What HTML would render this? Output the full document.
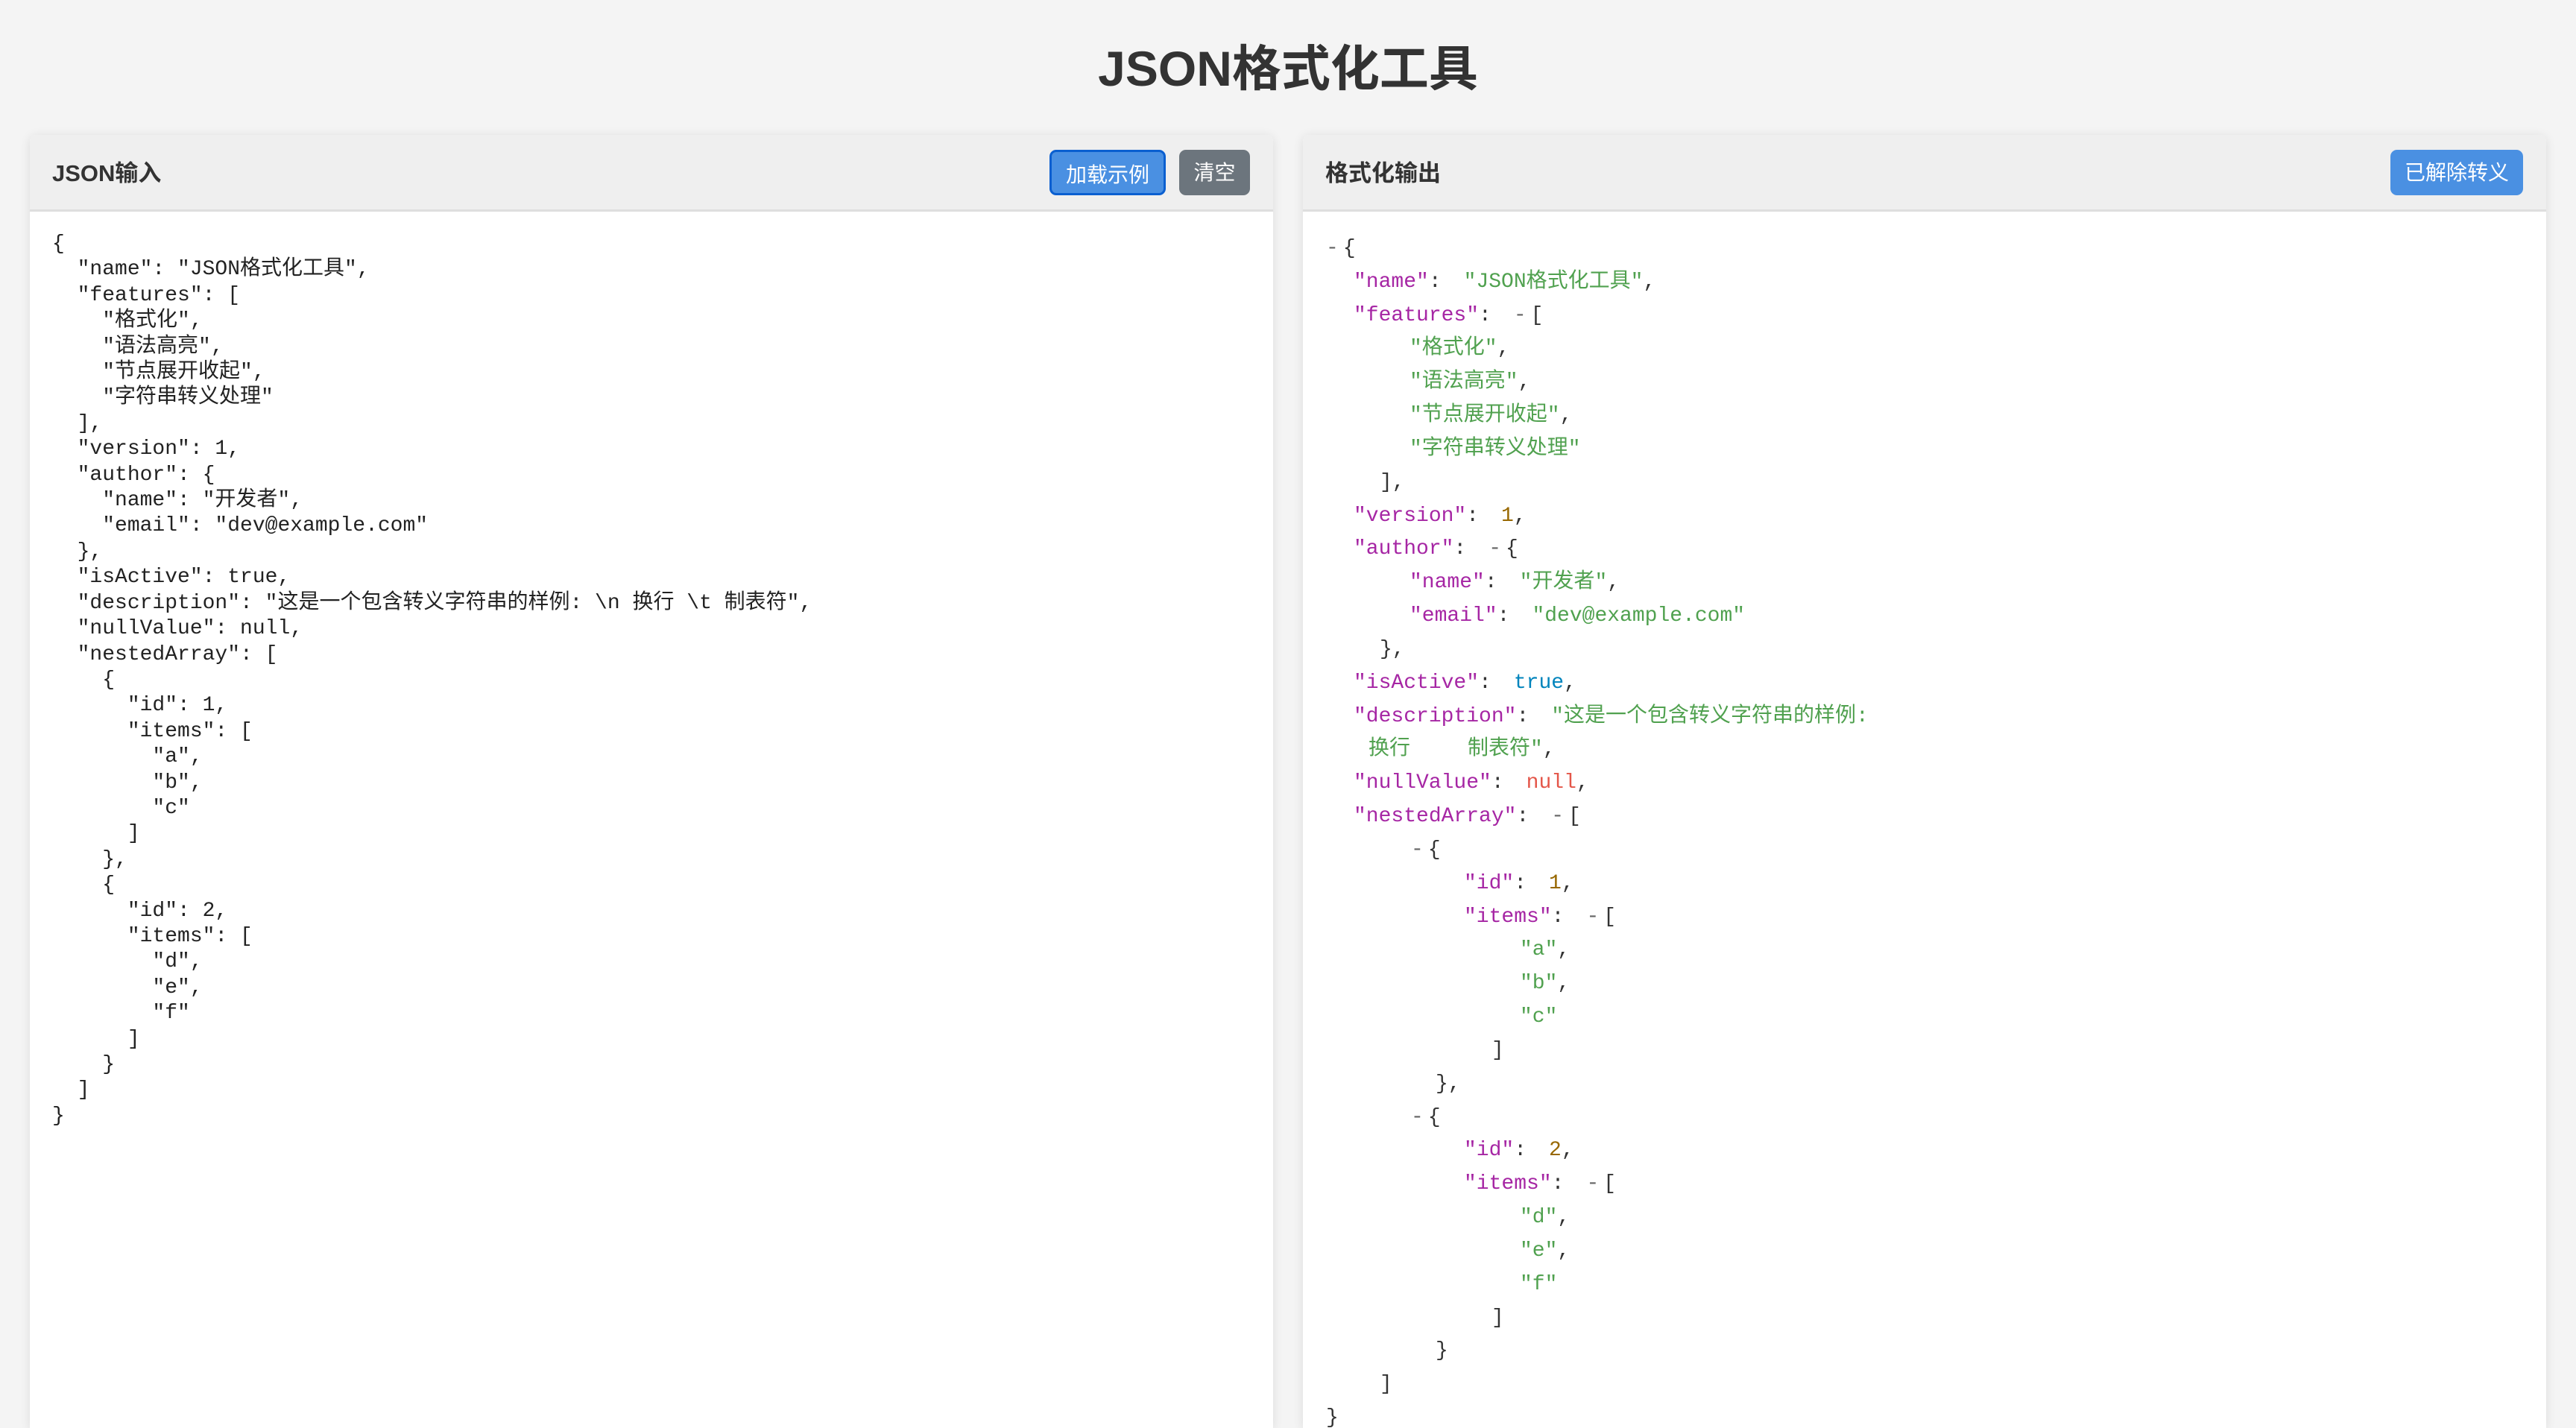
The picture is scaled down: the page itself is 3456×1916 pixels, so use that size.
<!DOCTYPE html>
<html><head><meta charset="utf-8"><style>
html,body{margin:0;padding:0;}
body{width:3456px;height:1916px;background:#f4f4f4;overflow:hidden;position:relative;font-family:"Liberation Sans","Noto Sans CJK SC",sans-serif;}
h1{position:absolute;top:52px;left:0;width:3456px;margin:0;text-align:center;font-size:66px;line-height:80px;font-weight:bold;color:#333;}
.panel{position:absolute;top:181px;height:1735px;background:#fff;box-shadow:0 2px 14px rgba(0,0,0,0.10);border-radius:8px 8px 0 0;overflow:hidden;}
.hdr{height:100px;background:#efefef;border-bottom:3px solid #dedede;position:relative;}
.hdr .t{position:absolute;left:30px;top:30px;font-size:31px;font-weight:bold;color:#333;line-height:44px;}
.btn{position:absolute;top:20px;height:61px;border-radius:9px;color:#fff;font-size:28px;line-height:61px;text-align:center;box-sizing:border-box;}
pre{margin:0;position:absolute;left:30px;top:130px;font-family:"Liberation Mono","Noto Sans CJK SC",monospace;font-size:28px;line-height:34.4px;color:#222;}
.l{position:absolute;white-space:pre;font-family:"Liberation Mono","Noto Sans CJK SC",monospace;font-size:28px;line-height:44.8px;color:#333;}
.k{color:#a626a4}.s{color:#50a14f}.n{color:#986801}.b{color:#0184bc}.z{color:#e45649}
.g{display:inline-block;width:30px}.tg{display:inline-block;margin-left:30px;color:#666}
.d{color:#666;margin-right:6px}
#r{position:absolute;left:0;top:4px;width:3456px;height:1912px;overflow:hidden;}
</style></head><body>
<h1>JSON格式化工具</h1>
<div class="panel" style="left:40px;width:1668px;">
<div class="hdr"><div class="t">JSON输入</div>
<div class="btn" style="left:1368px;width:156px;background:#4a90e2;border:3px solid #0a5fd0;">加载示例</div>
<div class="btn" style="left:1542px;width:95px;background:#6c757d;">清空</div></div>
<pre>{
  "name": "JSON格式化工具",
  "features": [
    "格式化",
    "语法高亮",
    "节点展开收起",
    "字符串转义处理"
  ],
  "version": 1,
  "author": {
    "name": "开发者",
    "email": "dev@example.com"
  },
  "isActive": true,
  "description": "这是一个包含转义字符串的样例: \n 换行 \t 制表符",
  "nullValue": null,
  "nestedArray": [
    {
      "id": 1,
      "items": [
        "a",
        "b",
        "c"
      ]
    },
    {
      "id": 2,
      "items": [
        "d",
        "e",
        "f"
      ]
    }
  ]
}</pre>
</div>
<div class="panel" style="left:1748px;width:1668px;">
<div class="hdr"><div class="t">格式化输出</div>
<div class="btn" style="left:1459px;width:178px;background:#4a90e2;">已解除转义</div></div>
</div>
<div id="r">
<div class="l" style="left:1779px;top:308px"><span class="d">-</span>{</div>
<div class="l" style="left:1816px;top:353px"><span class="k">"name"</span>:<span class="g"></span><span class="s">"JSON格式化工具"</span>,</div>
<div class="l" style="left:1816px;top:398px"><span class="k">"features"</span>:<span class="tg"><span class="d">-</span></span>[</div>
<div class="l" style="left:1891px;top:442px"><span class="s">"格式化"</span>,</div>
<div class="l" style="left:1891px;top:487px"><span class="s">"语法高亮"</span>,</div>
<div class="l" style="left:1891px;top:532px"><span class="s">"节点展开收起"</span>,</div>
<div class="l" style="left:1891px;top:577px"><span class="s">"字符串转义处理"</span></div>
<div class="l" style="left:1851px;top:622px">],</div>
<div class="l" style="left:1816px;top:667px"><span class="k">"version"</span>:<span class="g"></span><span class="n">1</span>,</div>
<div class="l" style="left:1816px;top:711px"><span class="k">"author"</span>:<span class="tg"><span class="d">-</span></span>{</div>
<div class="l" style="left:1891px;top:756px"><span class="k">"name"</span>:<span class="g"></span><span class="s">"开发者"</span>,</div>
<div class="l" style="left:1891px;top:801px"><span class="k">"email"</span>:<span class="g"></span><span class="s">"dev@example.com"</span></div>
<div class="l" style="left:1851px;top:846px">},</div>
<div class="l" style="left:1816px;top:891px"><span class="k">"isActive"</span>:<span class="g"></span><span class="b">true</span>,</div>
<div class="l" style="left:1816px;top:936px"><span class="k">"description"</span>:<span class="g"></span><span class="s">"这是一个包含转义字符串的样例:</span></div>
<div class="l" style="left:1836px;top:980px"><span class="s">换行<span style="display:inline-block;width:77px"></span>制表符"</span>,</div>
<div class="l" style="left:1816px;top:1025px"><span class="k">"nullValue"</span>:<span class="g"></span><span class="z">null</span>,</div>
<div class="l" style="left:1816px;top:1070px"><span class="k">"nestedArray"</span>:<span class="tg"><span class="d">-</span></span>[</div>
<div class="l" style="left:1893px;top:1115px"><span class="d">-</span>{</div>
<div class="l" style="left:1964px;top:1160px"><span class="k">"id"</span>:<span class="g"></span><span class="n">1</span>,</div>
<div class="l" style="left:1964px;top:1205px"><span class="k">"items"</span>:<span class="tg"><span class="d">-</span></span>[</div>
<div class="l" style="left:2039px;top:1249px"><span class="s">"a"</span>,</div>
<div class="l" style="left:2039px;top:1294px"><span class="s">"b"</span>,</div>
<div class="l" style="left:2039px;top:1339px"><span class="s">"c"</span></div>
<div class="l" style="left:2001px;top:1384px">]</div>
<div class="l" style="left:1926px;top:1429px">},</div>
<div class="l" style="left:1893px;top:1474px"><span class="d">-</span>{</div>
<div class="l" style="left:1964px;top:1518px"><span class="k">"id"</span>:<span class="g"></span><span class="n">2</span>,</div>
<div class="l" style="left:1964px;top:1563px"><span class="k">"items"</span>:<span class="tg"><span class="d">-</span></span>[</div>
<div class="l" style="left:2039px;top:1608px"><span class="s">"d"</span>,</div>
<div class="l" style="left:2039px;top:1653px"><span class="s">"e"</span>,</div>
<div class="l" style="left:2039px;top:1698px"><span class="s">"f"</span></div>
<div class="l" style="left:2001px;top:1743px">]</div>
<div class="l" style="left:1926px;top:1787px">}</div>
<div class="l" style="left:1851px;top:1832px">]</div>
<div class="l" style="left:1779px;top:1877px">}</div>
</div>
</body></html>
